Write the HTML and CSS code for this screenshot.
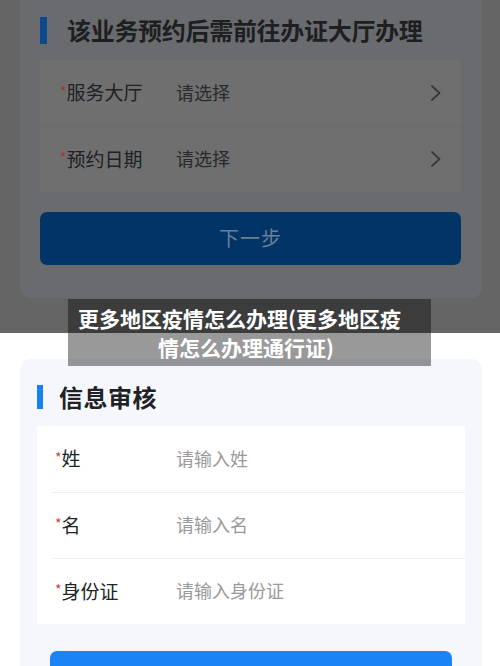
FILE: index.html
```html
<!DOCTYPE html>
<html lang="zh">
<head>
<meta charset="utf-8">
<link rel="stylesheet" href="styles.css">
</head>
<body>
<div class="page">
  <section class="top">
    <div class="card dim-card">
      <div class="sec-title"><span class="bar dim-bar"></span><span class="sec-text">该业务预约后需前往办证大厅办理</span></div>
      <div class="box dim-box">
        <div class="row dim-row">
          <span class="label"><span class="star">*</span>服务大厅</span>
          <span class="value dim-value">请选择</span>
          <svg class="chev" width="12" height="18" viewBox="0 0 12 18"><polyline points="2,2 9.5,9 2,16" fill="none" stroke="#38393c" stroke-width="1.8" stroke-linecap="round" stroke-linejoin="round"/></svg>
        </div>
        <div class="row dim-row">
          <span class="label"><span class="star">*</span>预约日期</span>
          <span class="value dim-value">请选择</span>
          <svg class="chev" width="12" height="18" viewBox="0 0 12 18"><polyline points="2,2 9.5,9 2,16" fill="none" stroke="#38393c" stroke-width="1.8" stroke-linecap="round" stroke-linejoin="round"/></svg>
        </div>
      </div>
      <div class="btn dim-btn">下一步</div>
    </div>
  </section>
  <section class="bottom">
    <div class="card light-card">
      <div class="sec-title light-title"><span class="bar light-bar"></span><span class="sec-text">信息审核</span></div>
      <div class="box light-box">
        <div class="row light-row">
          <span class="label"><span class="star">*</span>姓</span>
          <span class="value light-value">请输入姓</span>
        </div>
        <div class="row light-row">
          <span class="label"><span class="star">*</span>名</span>
          <span class="value light-value">请输入名</span>
        </div>
        <div class="row light-row">
          <span class="label"><span class="star">*</span>身份证</span>
          <span class="value light-value">请输入身份证</span>
        </div>
      </div>
      <div class="btn light-btn"></div>
    </div>
  </section>
  <div class="caption">
    <span class="cap-line cap-1">更多地区疫情怎么办理(更多地区疫</span>
    <span class="cap-line cap-2">情怎么办理通行证)</span>
  </div>
</div>
</body>
</html>
```

FILE: styles.css
```css
* { box-sizing: border-box; }
html, body { margin: 0; padding: 0; }
body {
  width: 500px;
  height: 666px;
  overflow: hidden;
  font-family: "Noto Sans CJK SC", "Noto Sans", sans-serif;
  background: #ffffff;
}
.page {
  position: relative;
  width: 500px;
  height: 666px;
  display: flex;
  flex-direction: column;
}

/* top dimmed section */
.top {
  height: 333px;
  background: #656566;
  padding: 0 18px 0 20px;
}
.card {
  display: flex;
  flex-direction: column;
}
.dim-card {
  height: 298px;
  background: #6a6b6e;
  border-radius: 0 0 10px 10px;
  padding: 17px 21px 0 20px;
}
.sec-title {
  display: flex;
  align-items: center;
  height: 27px;
}
.bar {
  width: 7px;
  height: 27px;
  margin-right: 20px;
}
.dim-bar { background: #0b4a8a; }
.sec-text {
  font-size: 24px;
  font-weight: 700;
  color: #1e1f22;
  line-height: 27px;
  letter-spacing: -0.3px;
  position: relative;
  top: -1px;
}
.box { display: flex; flex-direction: column; }
.dim-box {
  margin-top: 16px;
  background: #6f6f70;
}
.row {
  display: flex;
  align-items: center;
  height: 66px;
  padding-left: 20px;
  padding-bottom: 3px;
}
.dim-row { padding-right: 19px; }
.dim-row + .dim-row { border-top: 1px solid #6a6a6b; }
.label {
  width: 116px;
  font-size: 19px;
  color: #222326;
  white-space: nowrap;
  display: flex;
  align-items: center;
}
.star {
  color: #d03c3c;
  font-size: 14px;
  margin-right: 0;
  position: relative;
  top: -1px;
}
.dim-row .label { color: #202124; }
.dim-row .star { color: #a83232; }
.value {
  flex: 1;
  font-size: 18px;
}
.dim-value { color: #2a2a2c; }
.chev { display: block; position: relative; top: 1px; }
.btn {
  display: flex;
  align-items: center;
  justify-content: center;
  border-radius: 7px;
}
.dim-btn {
  margin-top: 20px;
  height: 53px;
  background: #023467;
  color: #6b7e97;
  font-size: 20px;
  letter-spacing: 1px;
  padding-bottom: 3px;
}

/* bottom section */
.bottom {
  flex: 1;
  background: #ffffff;
  padding: 26px 18px 0 20px;
  overflow: hidden;
}
.light-card {
  height: 320px;
  background: #f5f7fc;
  border-radius: 10px 10px 0 0;
  padding: 26px 17px 0 17px;
}
.light-title { height: 24px; }
.light-bar {
  width: 6px;
  height: 24px;
  background: #1482f4;
  margin-right: 16px;
}
.light-title .sec-text { color: #202124; letter-spacing: 0.5px; }
.light-box {
  margin-top: 17px;
  background: #ffffff;
}
.light-row {
  height: 66px;
  padding-left: 18px;
}
.light-row + .light-row { border-top: 1px solid #efeff1; margin-left: 15px; padding-left: 3px; }
.light-row .label { width: 121px; }
.light-value { color: #9a9a9d; }
.light-btn {
  margin: 27px 13px 0 13px;
  height: 40px;
  background: #1a83f6;
}

/* caption overlay */
.caption {
  position: absolute;
  left: 68px;
  top: 299px;
  width: 363px;
  height: 67px;
  background: rgba(0, 0, 0, 0.4);
  display: flex;
  flex-direction: column;
  justify-content: center;
  padding: 1px 0 0 0;
}
.cap-line {
  display: block;
  color: #ffffff;
  font-size: 21px;
  font-weight: 700;
  line-height: 29px;
  white-space: nowrap;
}
.cap-1 { padding-left: 10px; }
.cap-2 { padding-left: 90px; }
```
